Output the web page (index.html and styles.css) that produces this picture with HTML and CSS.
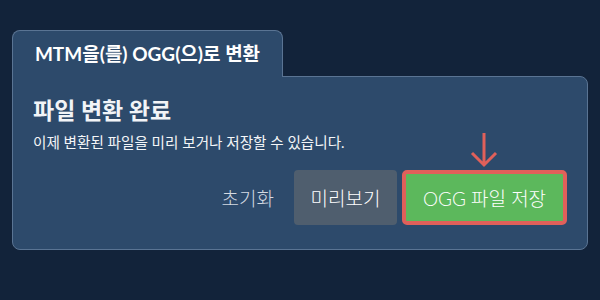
FILE: index.html
```html
<!DOCTYPE html>
<html lang="ko">

<head>
    <meta charset="UTF-8">
    <meta name="viewport" content="width=device-width, initial-scale=1.0">
    <title>MTM을(를) OGG(으)로 변환</title>
    <link rel="stylesheet" href="styles.css">
</head>

<body>
    <div class="converter">
        <div class="tab">MTM을(를) OGG(으)로 변환</div>

        <div class="panel">
            <h2>파일 변환 완료</h2>
            <p>이제 변환된 파일을 미리 보거나 저장할 수 있습니다.</p>

            <div class="actions">
                <button class="btn btn-reset">초기화</button>
                <button class="btn btn-preview">미리보기</button>
                <div class="save-wrap">
                    <!-- 저장 버튼을 가리키는 화살표 -->
                    <svg class="arrow" width="30" height="36" viewBox="0 0 30 36">
                        <path d="M15 1 V33 M3 21 L15 33 L27 21" fill="none" stroke="#e0605a" stroke-width="3" />
                    </svg>
                    <button class="btn btn-save">OGG 파일 저장</button>
                </div>
            </div>
        </div>
    </div>
</body>

</html>
```

FILE: styles.css
```css
body {
    font-family: "Lato", "Noto Sans CJK KR", sans-serif;
    margin: 0;
    padding: 30px 12px 0;
    background-color: #12233a;
    color: #f2f4f7;
}

.converter {
    width: 576px;
}

.tab {
    position: relative;
    z-index: 1;
    width: 269px;
    height: 46px;
    line-height: 46px;
    margin-bottom: -1px;
    text-align: center;
    font-size: 19px;
    font-weight: bold;
    color: #ffffff;
    background-color: #2d4a6b;
    border: 1px solid #5a7493;
    border-bottom: none;
    border-radius: 8px 8px 0 0;
}

.panel {
    height: 172px;
    padding: 0 20px;
    background-color: #2d4a6b;
    border: 1px solid #5a7493;
    border-radius: 0 8px 8px 8px;
}

.panel h2 {
    margin: 0;
    padding-top: 18px;
    font-size: 23px;
    font-weight: bold;
    line-height: 30px;
    color: #f2f4f7;
}

.panel p {
    margin: 8px 0 0;
    font-size: 14.6px;
    line-height: 20px;
    color: #f4f6f8;
}

.actions {
    display: flex;
    justify-content: flex-end;
    gap: 5px;
    margin-top: 17px;
}

.btn {
    font-family: "Lato", "Noto Sans CJK KR", sans-serif;
    font-size: 19px;
    font-weight: 300;
    height: 55px;
    padding: 0 15px;
    border: none;
    border-radius: 4px;
    color: #ffffff;
    cursor: pointer;
}

.btn-reset {
    background: none;
    color: #d4dae2;
}

.btn-preview {
    width: 103px;
    background-color: #4f5e6e;
}

.save-wrap {
    position: relative;
}

.btn-save {
    width: 165px;
    background-color: #5cb85c;
    border: 4px solid #e0605a;
    border-radius: 5px;
}

.arrow {
    position: absolute;
    left: 67px;
    top: -38px;
}
```
